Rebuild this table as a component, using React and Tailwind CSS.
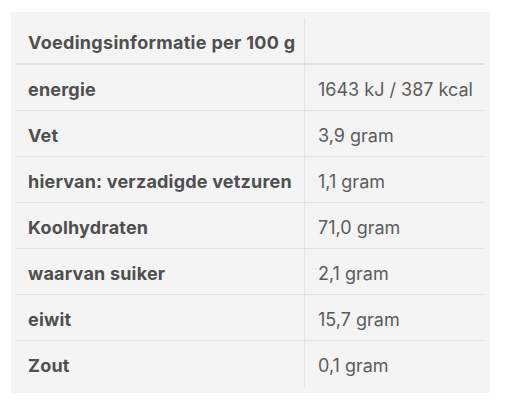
import React from "react";

const rows = [
  ["energie", "1643 kJ / 387 kcal"],
  ["Vet", "3,9 gram"],
  ["hiervan: verzadigde vetzuren", "1,1 gram"],
  ["Koolhydraten", "71,0 gram"],
  ["waarvan suiker", "2,1 gram"],
  ["eiwit", "15,7 gram"],
  ["Zout", "0,1 gram"],
];

export default function App() {
  return (
    <div className="w-[510px] h-[409px] bg-white pt-[12px] pl-[11px]" style={{ fontFamily: "Inter, 'Noto Sans', sans-serif" }}>
      <div className="w-[479px] h-[381px] bg-[#f4f4f4] px-[5px] pt-[6px]">
        <div className="flex flex-col w-[469px]">
          <div className="flex h-[47px] border-b-2 border-[#e2e2e2]">
            <div className="w-[289px] border-r border-[#e4e4e4] pl-[12px] pt-[3px] flex items-center text-[18px] font-bold text-[#4f4f4f] tracking-[0.3px]">
              Voedingsinformatie per 100 g
            </div>
            <div className="flex-1" />
          </div>
          {rows.map(([k, v], i) => (
            <div
              key={k}
              className={
                i < rows.length - 1
                  ? "flex h-[46px] border-b-[1.5px] border-[#e3e3e3]"
                  : "flex h-[46px]"
              }
            >
              <div className="w-[289px] border-r border-[#e4e4e4] pl-[12px] pt-[3px] flex items-center text-[18px] font-bold text-[#4f4f4f] tracking-[0.2px]">
                {k}
              </div>
              <div className="flex-1 pl-[13px] pt-[3px] flex items-center text-[18px] text-[#5c5c5c]">
                {v}
              </div>
            </div>
          ))}
        </div>
      </div>
    </div>
  );
}
